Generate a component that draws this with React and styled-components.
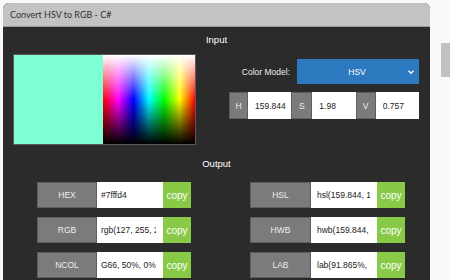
import React from "react";
import styled, { createGlobalStyle } from "styled-components";

const Global = createGlobalStyle`
  html, body { margin: 0; padding: 0; }
  body {
    background: #f9f9f9;
    font-family: "Liberation Sans", Arial, sans-serif;
    overflow: hidden;
  }
`;

const Page = styled.div`
  display: flex;
  width: 450px;
  height: 280px;
  overflow: hidden;
`;

const Main = styled.div`
  flex: 1;
  padding: 3px 11px 0 3px;
  min-width: 0;
`;

const ScrollTrack = styled.div`
  width: 9px;
  flex: none;
  padding-top: 43px;
`;

const ScrollThumb = styled.div`
  height: 34px;
  background: #c1c1c1;
`;

const Window = styled.div`
  background: #2b2b2b;
  border-radius: 6px 6px 0 0;
  height: 300px;
  overflow: hidden;
`;

const TitleBar = styled.div`
  height: 24px;
  background: #c3c3c3;
  border-bottom: 1px solid #9a9a9a;
  box-sizing: border-box;
  padding-left: 7px;
  display: flex;
  align-items: center;
  font-family: Lato, "Liberation Sans", sans-serif;
  font-size: 9px;
  color: #333333;
`;

const Body = styled.div`
  padding-top: 7px;
`;

const Heading = styled.div`
  color: #ffffff;
  font-size: 9.5px;
  line-height: 12px;
  text-align: center;
  margin-top: ${(p) => p.$top || 0}px;
  margin-bottom: ${(p) => p.$gap}px;
`;

const InputSection = styled.div`
  display: flex;
  padding: 0 11px 0 10px;
`;

const Preview = styled.div`
  display: flex;
  width: 183px;
  height: 91px;
  border: 1px solid #5a5a5a;
  box-sizing: border-box;
`;

const Swatch = styled.div`
  flex: 1;
  background: #7fffd4;
`;

const Spectrum = styled.div`
  width: 92px;
  background:
    linear-gradient(to bottom, rgba(255,255,255,1) 0%, rgba(255,255,255,0) 50%, rgba(0,0,0,0) 50%, rgba(0,0,0,1) 100%),
    linear-gradient(to right, #ff0000, #ff00ff, #0000ff, #00ffff, #00ff00, #ffff00, #ff0000);
`;

const Controls = styled.div`
  margin-left: auto;
  width: 190px;
  padding-top: 5px;
  display: flex;
  flex-direction: column;
  gap: 8px;
`;

const ModelRow = styled.div`
  display: flex;
  align-items: center;
  justify-content: flex-end;
  gap: 7px;
`;

const ModelLabel = styled.span`
  color: #eeeeee;
  font-size: 8.5px;
`;

const Select = styled.div`
  width: 122px;
  height: 25px;
  background: #2d79bf;
  color: #ffffff;
  font-size: 8.5px;
  display: flex;
  align-items: center;
  box-sizing: border-box;
  padding-right: 4px;
`;

const SelectText = styled.span`
  flex: 1;
  text-align: center;
  padding-left: 10px;
`;

const HsvRow = styled.div`
  display: grid;
  grid-template-columns: 19px 1fr 21px 1fr 20px 1fr;
  height: 27px;
`;

const Tag = styled.div`
  background: #7b7b7b;
  color: #eeeeee;
  font-size: 8.5px;
  display: flex;
  align-items: center;
  justify-content: center;
  border: 1px solid #5e5e5e;
  box-sizing: border-box;
`;

const Field = styled.input`
  min-width: 0;
  width: 100%;
  height: 100%;
  box-sizing: border-box;
  border: none;
  outline: none;
  margin: 0;
  background: #ffffff;
  color: #222222;
  font-family: "Liberation Sans", Arial, sans-serif;
  font-size: 8.5px;
  padding: 0 ${(p) => p.$padR || 4}px 0 ${(p) => p.$padL || 6}px;
`;

const OutputGrid = styled.div`
  display: grid;
  grid-template-columns: 154px 155px;
  column-gap: 59px;
  row-gap: 9px;
  padding-left: 34px;
`;

const OutRow = styled.div`
  display: grid;
  grid-template-columns: ${(p) => p.$label}px 1fr 28px;
  height: 26px;
`;

const Copy = styled.div`
  background: #88c947;
  color: #ffffff;
  font-size: 10px;
  display: flex;
  align-items: center;
  justify-content: center;
`;

const Chevron = () => (
  <svg width="8" height="6" viewBox="0 0 8 6">
    <polyline points="1.5,1.8 4,4.2 6.5,1.8" fill="none" stroke="#ffffff" strokeWidth="1.4" />
  </svg>
);

const outputs = [
  ["HEX", "#7fffd4", "HSL", "hsl(159.844, 100%, 74.9%)"],
  ["RGB", "rgb(127, 255, 212)", "HWB", "hwb(159.844, 49.8%, 0%)"],
  ["NCOL", "G66, 50%, 0%", "LAB", "lab(91.865%, -47.91, 10.57)"],
];

export default function App() {
  return (
    <Page>
      <Global />
      <Main>
        <Window>
          <TitleBar>Convert HSV to RGB - C#</TitleBar>
          <Body>
            <Heading $gap={8}>Input</Heading>
            <InputSection>
              <Preview>
                <Swatch />
                <Spectrum />
              </Preview>
              <Controls>
                <ModelRow>
                  <ModelLabel>Color Model:</ModelLabel>
                  <Select>
                    <SelectText>HSV</SelectText>
                    <Chevron />
                  </Select>
                </ModelRow>
                <HsvRow>
                  <Tag>H</Tag>
                  <Field readOnly value="159.844" $padL={7} />
                  <Tag>S</Tag>
                  <Field readOnly value="1.98" $padL={7} />
                  <Tag>V</Tag>
                  <Field readOnly value="0.757" $padL={7} />
                </HsvRow>
              </Controls>
            </InputSection>
            <Heading $top={13} $gap={12}>Output</Heading>
            <OutputGrid>
              {outputs.map(([a, av, b, bv]) => (
                <React.Fragment key={a}>
                  <OutRow $label={60}>
                    <Tag>{a}</Tag>
                    <Field readOnly value={av} $padL={4} $padR={7.5} />
                    <Copy>copy</Copy>
                  </OutRow>
                  <OutRow $label={61}>
                    <Tag>{b}</Tag>
                    <Field readOnly value={bv} $padL={6} $padR={7} />
                    <Copy>copy</Copy>
                  </OutRow>
                </React.Fragment>
              ))}
            </OutputGrid>
          </Body>
        </Window>
      </Main>
      <ScrollTrack>
        <ScrollThumb />
      </ScrollTrack>
    </Page>
  );
}
